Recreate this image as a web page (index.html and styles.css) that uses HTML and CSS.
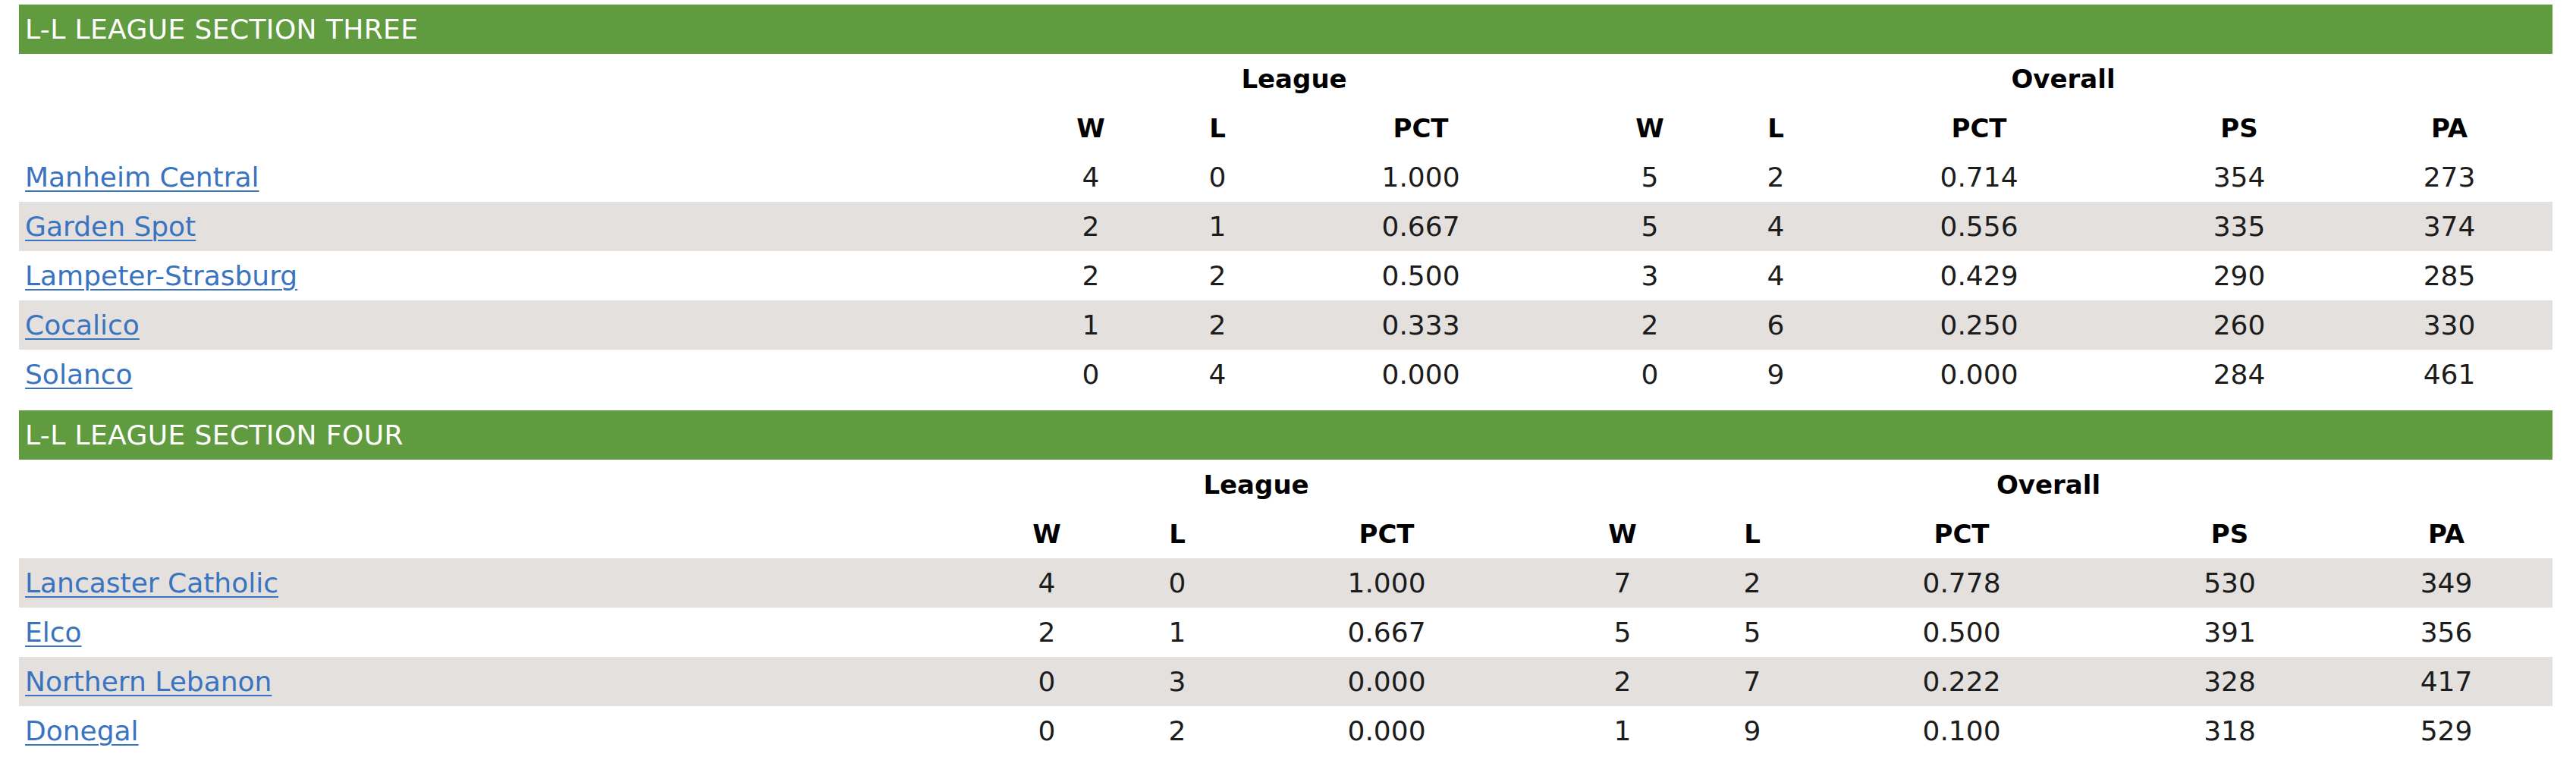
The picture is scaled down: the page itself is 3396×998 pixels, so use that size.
FILE: index.html
```html
<!DOCTYPE html>
<html lang="en">
<head>
<meta charset="utf-8">
<title>L-L League Standings</title>
<link rel="stylesheet" href="styles.css">
</head>
<body>
<div class="standings">
  <section class="division">
    <h2 class="division-title">L-L LEAGUE SECTION THREE</h2>
    <table class="stand-table s3">
      <colgroup>
        <col class="c-team"><col class="c-w"><col class="c-l"><col class="c-pct">
        <col class="c-ow"><col class="c-ol"><col class="c-opct"><col class="c-ps"><col class="c-pa">
      </colgroup>
      <thead>
        <tr class="group-row"><th></th><th colspan="3">League</th><th colspan="5">Overall</th></tr>
        <tr class="col-row"><th></th><th>W</th><th>L</th><th>PCT</th><th>W</th><th>L</th><th>PCT</th><th>PS</th><th>PA</th></tr>
      </thead>
      <tbody>
        <tr><td class="team"><a href="#">Manheim Central</a></td><td>4</td><td>0</td><td>1.000</td><td>5</td><td>2</td><td>0.714</td><td>354</td><td>273</td></tr>
        <tr class="alt"><td class="team"><a href="#">Garden Spot</a></td><td>2</td><td>1</td><td>0.667</td><td>5</td><td>4</td><td>0.556</td><td>335</td><td>374</td></tr>
        <tr><td class="team"><a href="#">Lampeter-Strasburg</a></td><td>2</td><td>2</td><td>0.500</td><td>3</td><td>4</td><td>0.429</td><td>290</td><td>285</td></tr>
        <tr class="alt"><td class="team"><a href="#">Cocalico</a></td><td>1</td><td>2</td><td>0.333</td><td>2</td><td>6</td><td>0.250</td><td>260</td><td>330</td></tr>
        <tr><td class="team"><a href="#">Solanco</a></td><td>0</td><td>4</td><td>0.000</td><td>0</td><td>9</td><td>0.000</td><td>284</td><td>461</td></tr>
      </tbody>
    </table>
  </section>
  <section class="division">
    <h2 class="division-title">L-L LEAGUE SECTION FOUR</h2>
    <table class="stand-table s4">
      <colgroup>
        <col class="c-team"><col class="c-w"><col class="c-l"><col class="c-pct">
        <col class="c-ow"><col class="c-ol"><col class="c-opct"><col class="c-ps"><col class="c-pa">
      </colgroup>
      <thead>
        <tr class="group-row"><th></th><th colspan="3">League</th><th colspan="5">Overall</th></tr>
        <tr class="col-row"><th></th><th>W</th><th>L</th><th>PCT</th><th>W</th><th>L</th><th>PCT</th><th>PS</th><th>PA</th></tr>
      </thead>
      <tbody>
        <tr class="alt"><td class="team"><a href="#">Lancaster Catholic</a></td><td>4</td><td>0</td><td>1.000</td><td>7</td><td>2</td><td>0.778</td><td>530</td><td>349</td></tr>
        <tr><td class="team"><a href="#">Elco</a></td><td>2</td><td>1</td><td>0.667</td><td>5</td><td>5</td><td>0.500</td><td>391</td><td>356</td></tr>
        <tr class="alt"><td class="team"><a href="#">Northern Lebanon</a></td><td>0</td><td>3</td><td>0.000</td><td>2</td><td>7</td><td>0.222</td><td>328</td><td>417</td></tr>
        <tr><td class="team"><a href="#">Donegal</a></td><td>0</td><td>2</td><td>0.000</td><td>1</td><td>9</td><td>0.100</td><td>318</td><td>529</td></tr>
      </tbody>
    </table>
  </section>
</div>
</body>
</html>
```
FILE: styles.css
```css
html, body {
  margin: 0;
  padding: 0;
  background: #ffffff;
}

body {
  font-family: "DejaVu Sans", "Open Sans", sans-serif;
  color: #1c1c1c;
}

.standings {
  width: 3340px;
  margin-left: 25px;
  padding-top: 6px;
}

.division {
  margin-bottom: 15px;
}

.division-title {
  margin: 0;
  height: 65px;
  line-height: 65px;
  padding-left: 8px;
  background: #619b3f;
  color: #ffffff;
  font-size: 36px;
  font-weight: 400;
  letter-spacing: 0.4px;
}

.stand-table {
  width: 100%;
  table-layout: fixed;
  border-collapse: collapse;
  border-spacing: 0;
  font-size: 36px;
}

.stand-table th,
.stand-table td {
  height: 65px;
  padding: 0 8px;
  text-align: center;
  vertical-align: middle;
  white-space: nowrap;
  line-height: 1;
}

.stand-table th {
  color: #000000;
  font-weight: 700;
  font-size: 34px;
}

.stand-table td.team {
  text-align: left;
}

.team a {
  color: #3a74c1;
  text-decoration: underline;
  text-decoration-thickness: 2px;
  text-underline-offset: 5px;
}

.stand-table tr.alt td {
  background: #e3e0de;
}

/* Section three column widths */
.s3 .c-team { width: 1312px; }
.s3 .c-w    { width: 202px; }
.s3 .c-l    { width: 132px; }
.s3 .c-pct  { width: 404px; }
.s3 .c-ow   { width: 200px; }
.s3 .c-ol   { width: 132px; }
.s3 .c-opct { width: 404px; }
.s3 .c-ps   { width: 282px; }
.s3 .c-pa   { width: 272px; }

/* Section four column widths */
.s4 .c-team { width: 1251px; }
.s4 .c-w    { width: 208px; }
.s4 .c-l    { width: 136px; }
.s4 .c-pct  { width: 416px; }
.s4 .c-ow   { width: 206px; }
.s4 .c-ol   { width: 136px; }
.s4 .c-opct { width: 416px; }
.s4 .c-ps   { width: 291px; }
.s4 .c-pa   { width: 280px; }
```
